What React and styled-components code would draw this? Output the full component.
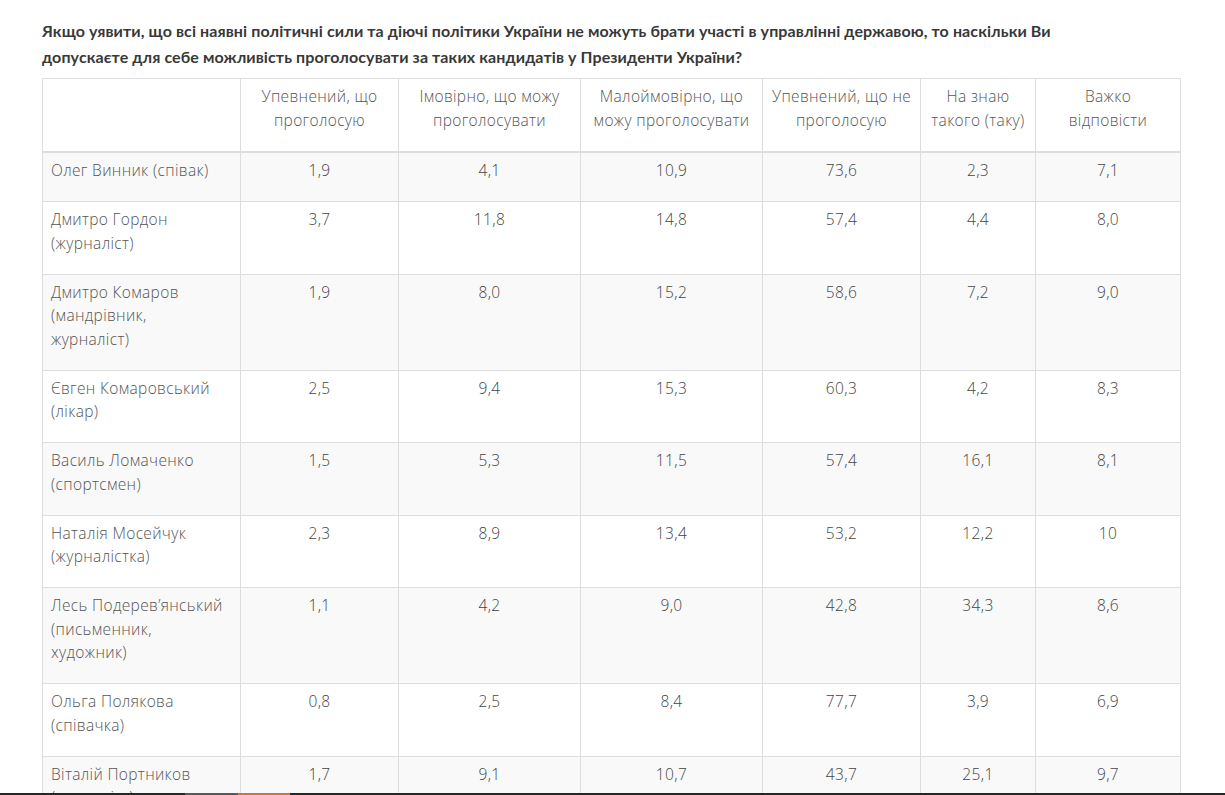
import React from 'react';
import styled, { createGlobalStyle } from 'styled-components';

const GlobalStyle = createGlobalStyle`
    body {
        margin: 0;
        background: #fff;
        font-family: 'Open Sans', Lato, sans-serif;
    }
`;

const Page = styled.div`
    padding: 18px 45px 0 42px;
`;

const Title = styled.h3`
    margin: 0 0 8px;
    font-family: Lato, 'Open Sans', sans-serif;
    font-size: 16px;
    line-height: 26px;
    font-weight: 700;
    color: #383838;
    letter-spacing: 0.1px;
`;

const Table = styled.table`
    width: 1138px;
    border-collapse: collapse;
    table-layout: fixed;
    font-size: 15.5px;
    font-weight: 300;
    letter-spacing: 0.35px;
    color: #444;
`;

const Row = styled.tr`
    background: ${({ $odd }) => ($odd ? '#f9f9f9' : '#fff')};
`;

const Head = styled.th`
    border: 1px solid #ddd;
    border-bottom: 2px solid #ddd;
    padding: 5px 4px 19px;
    line-height: 24px;
    font-weight: 300;
    text-align: center;
    vertical-align: top;
    white-space: pre-line;
    color: #555;
`;

const Cell = styled.td`
    border: 1px solid #ddd;
    padding: 6px 8px 18.5px;
    line-height: 23.5px;
    vertical-align: top;
    white-space: pre-line;
    text-align: ${({ $left }) => ($left ? 'left' : 'center')};
    color: ${({ $left }) => ($left ? '#555' : '#444')};
`;

const BottomBar = styled.div`
    position: fixed;
    left: 0;
    right: 0;
    bottom: 0;
    height: 2px;
    display: flex;
    background: #262626;
`;

const BarPart = styled.div`
    width: ${({ $w }) => $w}px;
    background: ${({ $c }) => $c};
`;

const widths = [198, 158, 182, 182, 158, 115, 145];

const heads = [
    '',
    'Упевнений, що\nпроголосую',
    'Імовірно, що можу\nпроголосувати',
    'Малоймовірно, що\nможу проголосувати',
    'Упевнений, що не\nпроголосую',
    'На знаю\nтакого (таку)',
    'Важко\nвідповісти',
];

const rows = [
    ['Олег Винник (співак)', '1,9', '4,1', '10,9', '73,6', '2,3', '7,1'],
    ['Дмитро Гордон\n(журналіст)', '3,7', '11,8', '14,8', '57,4', '4,4', '8,0'],
    ['Дмитро Комаров\n(мандрівник,\nжурналіст)', '1,9', '8,0', '15,2', '58,6', '7,2', '9,0'],
    ['Євген Комаровський\n(лікар)', '2,5', '9,4', '15,3', '60,3', '4,2', '8,3'],
    ['Василь Ломаченко\n(спортсмен)', '1,5', '5,3', '11,5', '57,4', '16,1', '8,1'],
    ['Наталія Мосейчук\n(журналістка)', '2,3', '8,9', '13,4', '53,2', '12,2', '10'],
    ['Лесь Подерев\u2019янський\n(письменник,\nхудожник)', '1,1', '4,2', '9,0', '42,8', '34,3', '8,6'],
    ['Ольга Полякова\n(співачка)', '0,8', '2,5', '8,4', '77,7', '3,9', '6,9'],
    ['Віталій Портников\n(журналіст)', '1,7', '9,1', '10,7', '43,7', '25,1', '9,7'],
];

const App = () => (
    <>
        <GlobalStyle />
        <Page>
            <Title>
                Якщо уявити, що всі наявні політичні сили та діючі політики України не можуть брати участі в
                управлінні державою, то наскільки Ви
                <br />
                допускаєте для себе можливість проголосувати за таких кандидатів у Президенти України?
            </Title>
            <Table>
                <colgroup>
                    {widths.map((w, i) => (
                        <col key={i} style={{ width: w }} />
                    ))}
                </colgroup>
                <thead>
                    <tr>
                        {heads.map((h, i) => (
                            <Head key={i}>{h}</Head>
                        ))}
                    </tr>
                </thead>
                <tbody>
                    {rows.map((r, i) => (
                        <Row key={i} $odd={i % 2 === 0}>
                            {r.map((v, j) => (
                                <Cell key={j} $left={j === 0}>
                                    {v}
                                </Cell>
                            ))}
                        </Row>
                    ))}
                </tbody>
            </Table>
        </Page>
        <BottomBar>
            <BarPart $w={185} $c="#262626" />
            <BarPart $w={53} $c="#5a5a5a" />
            <BarPart $w={52} $c="#c8783a" />
        </BottomBar>
    </>
);

export default App;
